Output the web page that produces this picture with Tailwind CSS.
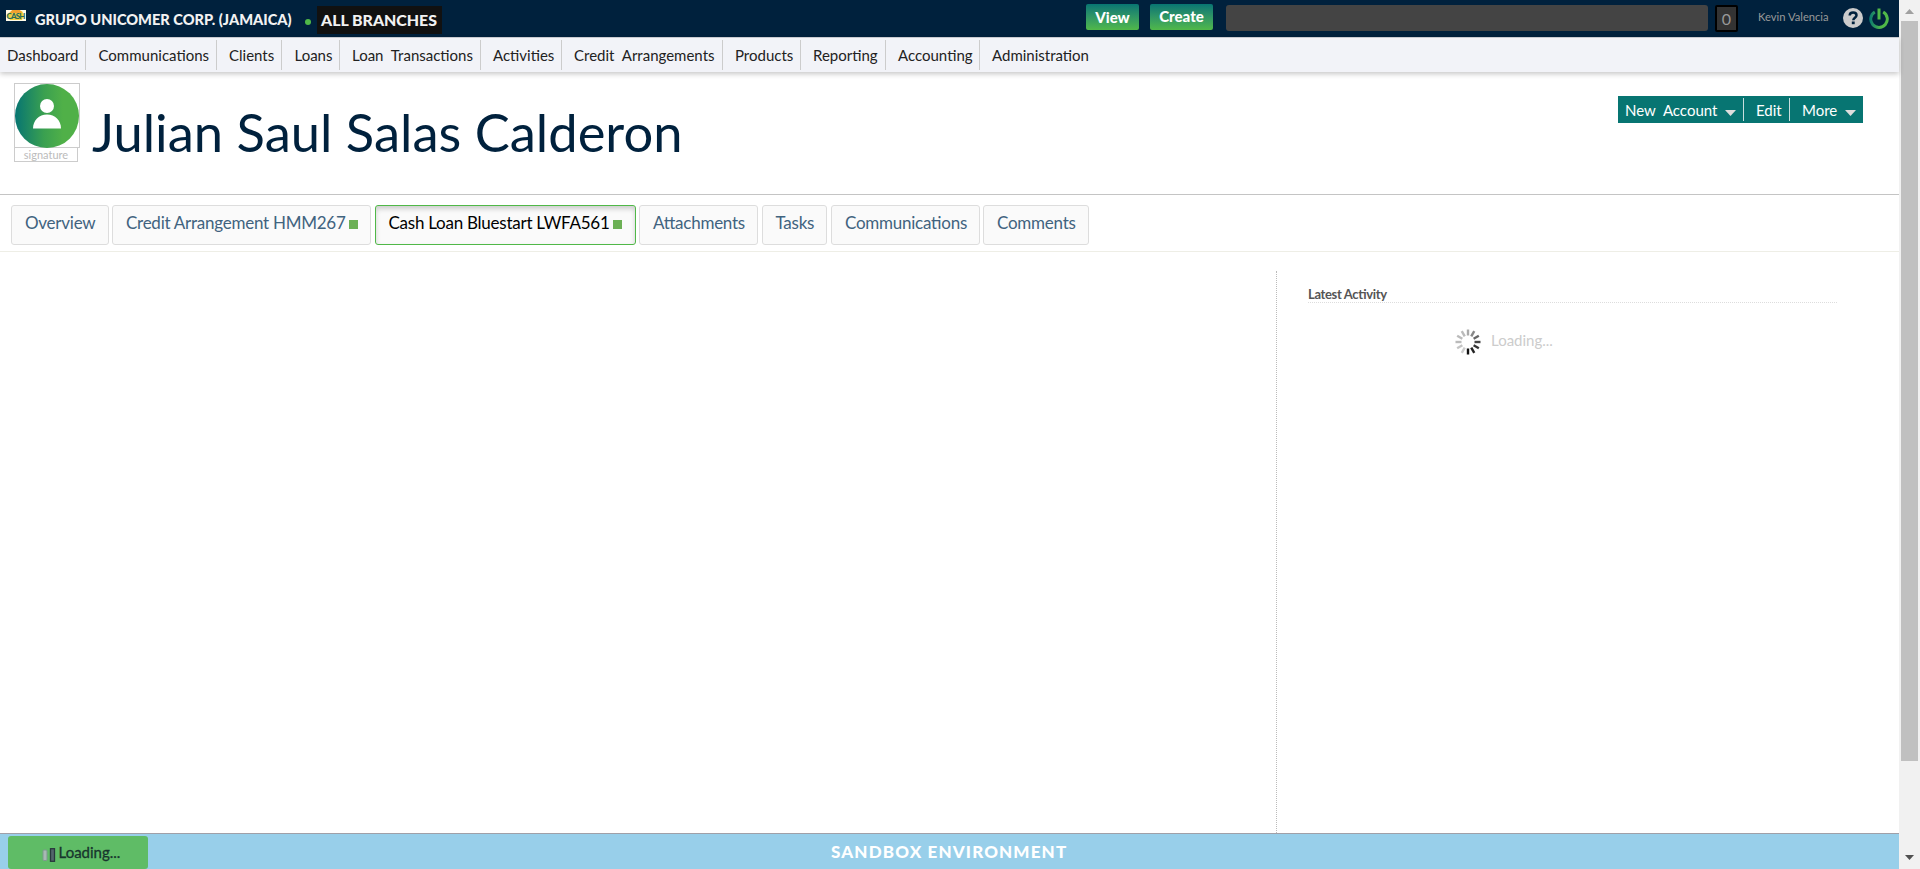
<!DOCTYPE html>
<html lang="en">
<head>
<meta charset="utf-8">
<title>Julian Saul Salas Calderon</title>
<script src="https://cdn.jsdelivr.net/npm/@tailwindcss/browser@4"></script>
</head>
<body class="flex h-[869px] w-[1920px] overflow-hidden bg-white font-['Lato',sans-serif] whitespace-nowrap">
<div class="relative flex h-full w-[1899px] flex-col">
  <header class="flex h-[37px] shrink-0 items-start bg-[#00213d]">
    <svg class="mt-[10px] ml-[6px] h-[11px] w-5 shrink-0" viewBox="0 0 20 11"><rect width="20" height="11" fill="#fffbe8"/><path d="M5 1h11l2 4-2 5H4L1 5z" fill="#f3d040"/><path d="M6 0h8l2 3H4z" fill="#f0a030"/><text x="0.500" y="9" font-size="8" font-weight="900" textLength="19" fill="#2a6a5a" font-family="Lato">CASH</text></svg>
    <div class="mt-[10px] ml-[9px] w-[273px] text-[14.6px] leading-5 font-black text-[#f2f2f2]">GRUPO UNICOMER CORP. (JAMAICA)</div>
    <div class="mt-[19px] -ml-[3px] size-[6px] rounded-full bg-[#50b848]"></div>
    <div class="mt-[6px] ml-[6px] h-7 w-[125px] bg-[#111] pl-1 text-[15.9px] leading-[28px] font-black text-[#f2f2f2]">ALL BRANCHES</div>
    <div class="mt-1 ml-[644px] h-[26px] w-[53px] rounded-[2px] bg-gradient-to-b from-[#077572] to-[#50b848] text-center text-[15px] leading-[26px] font-black text-white">View</div>
    <div class="mt-1 ml-[11px] h-[26px] w-[63px] rounded-[2px] bg-gradient-to-b from-[#077572] to-[#50b848] text-center text-[15px] leading-[24px] font-black text-white">Create</div>
    <div class="mt-[5px] ml-[13px] h-[26px] w-[482px] rounded-[3px] bg-[#444]"></div>
    <div class="mt-[5px] ml-[7px] h-[27px] w-[23px] rounded-[2px] border-2 border-black bg-[#333] text-center text-[16px] leading-[24px] text-[#999]">0</div>
    <div class="mt-[9px] ml-5 w-[85px] text-[11.2px] leading-4 text-[#999]">Kevin Valencia</div>
    <svg class="mt-2 h-5 w-5 shrink-0" viewBox="0 0 20 20"><circle cx="10" cy="10" r="10" fill="#ccc"/><path d="M6.700 7.600c0-2 1.400-3.200 3.400-3.200s3.400 1.200 3.400 2.900c0 2.400-3.200 2.500-3.200 5" fill="none" stroke="#00213d" stroke-width="2.500"/><rect x="8.800" y="13.500" width="2.900" height="2.700" fill="#00213d"/></svg>
    <svg class="mt-2 ml-[6px] h-[21px] w-5 shrink-0" viewBox="0 0 20 21"><defs><linearGradient id="pw" gradientUnits="userSpaceOnUse" x1="0" x2="20" y1="0" y2="0"><stop stop-color="#077572"/><stop offset=".6" stop-color="#50b848"/></linearGradient></defs><path d="M5.800 4A8.300 8.300 0 1 0 14.200 4" fill="none" stroke="url(#pw)" stroke-width="3"/><path d="M8.500 0.500h3v11h-3z" fill="#50b848"/></svg>
  </header>
  <nav class="flex h-[35px] shrink-0 items-start border-t border-[#c8cad0] bg-[#f2f3f8] pt-[2px] pl-[7px] text-[15px] leading-[31px] text-[#222] shadow-[0_2px_5px_rgba(0,0,0,0.22)] [word-spacing:4px]">
    <div class="h-[30px] w-[79px] border-r border-[#ccc]">Dashboard</div>
    <div class="h-[30px] w-[131px] border-r border-[#ccc] pl-[12.500px]">Communications</div>
    <div class="h-[30px] w-[65px] border-r border-[#ccc] pl-3">Clients</div>
    <div class="h-[30px] w-[58px] border-r border-[#ccc] pl-[12.500px]">Loans</div>
    <div class="h-[30px] w-[141px] border-r border-[#ccc] pl-3">Loan Transactions</div>
    <div class="h-[30px] w-[81px] border-r border-[#ccc] pl-3">Activities</div>
    <div class="h-[30px] w-[161px] border-r border-[#ccc] pl-3">Credit Arrangements</div>
    <div class="h-[30px] w-[78px] border-r border-[#ccc] pl-3">Products</div>
    <div class="h-[30px] w-[85px] border-r border-[#ccc] pl-3">Reporting</div>
    <div class="h-[30px] w-[94px] border-r border-[#ccc] pl-3">Accounting</div>
    <div class="h-[30px] pl-3">Administration</div>
  </nav>
  <section class="flex h-[123px] shrink-0 items-start border-b border-[#c4c4c4] pt-[11px] pl-[14px]">
    <div class="w-[66px]">
      <div class="h-[65px] border border-[#ccc]">
        <svg class="size-16" viewBox="0 0 64 64"><defs><linearGradient id="av"><stop stop-color="#077572"/><stop offset=".45" stop-color="#3aa050"/><stop offset=".75" stop-color="#50b048"/></linearGradient></defs><circle cx="32" cy="32" r="32" fill="url(#av)"/><circle cx="32" cy="22" r="7" fill="#fff"/><path d="M18 44.500c0-8 6-14 14-14s14 6 14 14z" fill="#fff"/></svg>
      </div>
      <div class="-mt-px h-[15px] w-16 border border-[#ccc] bg-white text-center text-[11px] leading-[14px] text-[#bbb]">signature</div>
    </div>
    <h1 class="mt-[17px] ml-[12px] w-[1526px] text-[52.5px] leading-[64px] text-[#00213d]">Julian Saul Salas Calderon</h1>
    <div class="mt-[13px] flex h-[27px] w-[245px] items-start bg-[#077572] pt-[2px] text-[15px] leading-[25px] text-white">
      <div class="flex h-[23px] w-[126px] border-r border-[#c8dedd] pl-[7px] [word-spacing:4px]"><span class="w-[100px]">New Account</span><span class="mt-3 h-[6px] w-[11px] bg-[#ddd] [clip-path:polygon(0_0,100%_0,50%_100%)]"></span></div>
      <div class="h-[23px] w-[46px] border-r border-[#c8dedd] pl-3">Edit</div>
      <div class="flex pl-3"><span class="w-[43px]">More</span><span class="mt-3 h-[6px] w-[11px] bg-[#ddd] [clip-path:polygon(0_0,100%_0,50%_100%)]"></span></div>
    </div>
  </section>
  <div class="flex h-[57px] shrink-0 items-start gap-[3px] border-b border-[#eeeee6] pt-[10px] pl-[11px] text-[17px] leading-[33px] tracking-[-0.25px] text-[#41637f] [font-feature-settings:'liga'_1]">
    <div class="h-10 w-[98px] rounded-[3px] border border-[#ddd] bg-[#fafafa] pl-[13px]">Overview</div>
    <div class="flex h-10 w-[259px] rounded-[3px] border border-[#ddd] bg-[#fafafa] pl-[13px]"><span class="w-[223px]">Credit Arrangement HMM267</span><i class="mt-[14px] size-[9px] bg-[#6cb055]"></i></div>
    <div class="ml-px flex h-10 w-[261px] rounded-[3px] border border-[#50b848] bg-[#fafafa] pl-[12.500px] text-black shadow-[inset_0_3px_5px_rgba(0,0,0,0.18)]"><span class="w-[224.500px]">Cash Loan Bluestart LWFA561</span><i class="mt-[14px] size-[9px] bg-[#6cb055]"></i></div>
    <div class="h-10 w-[119px] rounded-[3px] border border-[#ddd] bg-[#fafafa] pl-[13px]">Attachments</div>
    <div class="ml-px h-10 w-[65px] rounded-[3px] border border-[#ddd] bg-[#fafafa] pl-[12.500px]">Tasks</div>
    <div class="ml-px h-10 w-[149px] rounded-[3px] border border-[#ddd] bg-[#fafafa] pl-[13px]">Communications</div>
    <div class="h-10 w-[106px] rounded-[3px] border border-[#ddd] bg-[#fafafa] pl-[13px]">Comments</div>
  </div>
  <main class="flex grow justify-end pt-[19px]">
    <aside class="w-[623px] border-l border-dotted border-[#bbb] pl-[31px]">
      <h2 class="mt-[14px] h-[18px] w-[529px] border-b border-dotted border-[#ddd] text-[13px] leading-[19px] font-bold tracking-[-0.35px] text-[#555] [font-feature-settings:'liga'_1]">Latest Activity</h2>
      <div class="mt-[26px] flex pl-[147px]">
        <svg class="h-[26px] w-[26px]" viewBox="-13 -13 26 26" stroke-width="2.400"><path d="M0 6.500v6" stroke="#111"/><path d="M0 6.500v6" stroke="#222" transform="rotate(-30)"/><path d="M0 6.500v6" stroke="#333" transform="rotate(-60)"/><path d="M0 6.500v6" stroke="#444" transform="rotate(-90)"/><path d="M0 6.500v6" stroke="#666" transform="rotate(-120)"/><path d="M0 6.500v6" stroke="#888" transform="rotate(-150)"/><path d="M0 6.500v6" stroke="#aaa" transform="rotate(180)"/><path d="M0 6.500v6" stroke="#bbb" transform="rotate(150)"/><path d="M0 6.500v6" stroke="#bbb" transform="rotate(120)"/><path d="M0 6.500v6" stroke="#bbb" transform="rotate(90)"/><path d="M0 6.500v6" stroke="#c4c4c4" transform="rotate(60)"/><path d="M0 6.500v6" stroke="#ccc" transform="rotate(30)"/></svg>
        <span class="ml-[10px] text-[15px] leading-[22px] text-[#ccc]">Loading...</span>
      </div>
    </aside>
  </main>
  <footer class="flex h-9 shrink-0 border-t border-[#a0a0a8] bg-[#98cfea]">
    <div class="mt-[2px] ml-2 flex h-[33px] w-[140px] rounded-[3px] bg-[#5fbc66] pl-[34px] text-[15px] leading-[33px] text-[#17352d] [-webkit-text-stroke:0.3px_#17352d]">
      <svg class="mt-3 h-[15px] w-[16.500px]" viewBox="0 0 16.500 15"><rect x="1" y="2" width="4" height="10.500" rx="1" fill="#a8b8b4" stroke="#7c9a8c"/><rect x="8.500" y="0.700" width="4" height="12.600" fill="#53656b" stroke="#28383c" stroke-width="1.300"/></svg>
      <span>Loading...</span>
    </div>
    <div class="ml-[683px] text-[17px] leading-[36px] font-black tracking-[1.150px] text-white">SANDBOX ENVIRONMENT</div>
  </footer>
</div>
<div class="flex h-full w-[21px] flex-col items-center bg-[#f1f1f1]">
  <i class="mt-[9px] h-[5px] w-[9px] bg-[#a0a0a0] [clip-path:polygon(50%_0,100%_100%,0_100%)]"></i>
  <div class="mt-[7px] h-[740px] w-[17px] bg-[#c0c0c0]"></div>
  <i class="mt-[94px] h-[5px] w-[9px] bg-[#505050] [clip-path:polygon(0_0,100%_0,50%_100%)]"></i>
</div>
</body>
</html>
